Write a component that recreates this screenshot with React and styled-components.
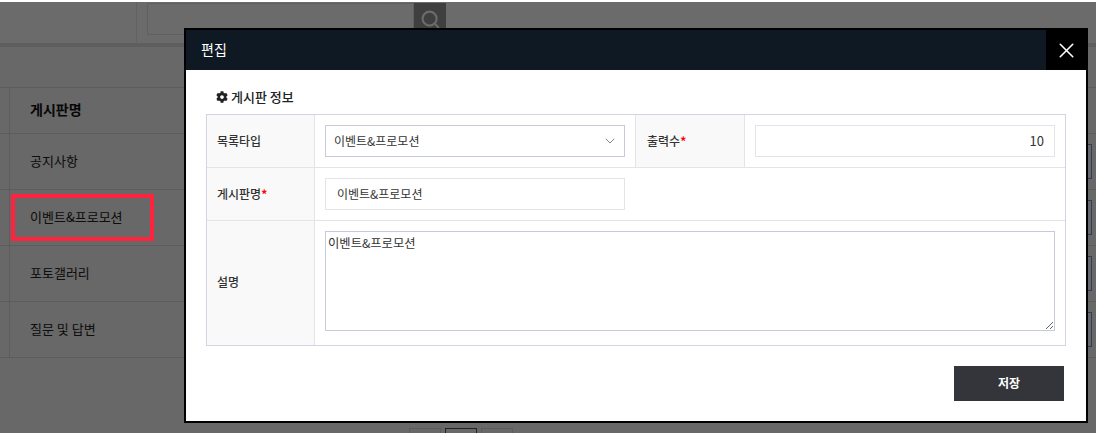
import React from 'react';
import styled, { createGlobalStyle } from 'styled-components';
import { FaCog } from 'react-icons/fa';
import { ChevronDown, Search, X } from 'lucide-react';

const GlobalStyle = createGlobalStyle`
    * {
        box-sizing: border-box;
    }
    html, body {
        margin: 0;
        background: #fff;
        font-family: "Noto Sans CJK KR", "Noto Sans", sans-serif;
        color: #222;
    }
`;

const Screen = styled.div`
    width: 1096px;
    height: 433px;
    padding-top: 2px;
    overflow: hidden;
    background: #fff;
`;

const Stage = styled.div`
    position: relative;
    height: 431px;
    overflow: hidden;
    background: #f7f7f7;
`;

const Backdrop = styled.div`
    position: absolute;
    inset: 0;
    background: rgba(0, 0, 0, 0.58);
`;

const TopBar = styled.header`
    display: flex;
    height: 45px;
    background: #fff;
    border-bottom: 4px solid #e0e0e0;
`;

const Brand = styled.div`
    width: 137px;
    border-right: 1px solid #eaeaea;
`;

const SearchBox = styled.div`
    display: flex;
    height: 32px;
    margin: 1px 0 0 10px;
`;

const SearchInput = styled.div`
    width: 267px;
    border: 1px solid #e4e4e4;
    background: #fff;
`;

const SearchButton = styled.button`
    display: flex;
    align-items: center;
    justify-content: center;
    width: 32px;
    padding: 0;
    border: none;
    background: #969696;
    color: #fff;
`;

const Toolbar = styled.div`
    height: 40px;
`;

const Row = styled.div`
    display: flex;
    align-items: center;
    height: 56px;
    padding-right: 4px;
    border-bottom: 1px solid #dedede;
    ${({ $head }) => $head && 'height: 47px; border-top: 1px solid #dedede;'}
`;

const NameCell = styled.div`
    display: flex;
    align-items: center;
    align-self: stretch;
    margin-left: 9px;
    padding: 0 0 ${({ $head }) => ($head ? '4px' : '2px')} 20px;
    border-left: 1px solid #dedede;
    font-size: ${({ $head }) => ($head ? '14px' : '13px')};
    font-weight: ${({ $head }) => ($head ? 700 : 400)};
    color: ${({ $head }) => ($head ? '#111' : '#222')};
`;

const RowButton = styled.div`
    width: 60px;
    height: 35px;
    margin-left: auto;
    border: 1px solid #6f93d8;
`;

const Pagination = styled.div`
    display: flex;
    gap: 4px;
    margin-top: 70px;
    padding-left: 409px;
`;

const PageButton = styled.div`
    width: 32px;
    height: 32px;
    border: 1px solid ${({ $active }) => ($active ? '#555' : '#dcdcdc')};
`;

const Highlight = styled.div`
    position: absolute;
    left: 11px;
    top: 192px;
    width: 143px;
    height: 47px;
    border: 4px solid #ff2340;
`;

const Modal = styled.section`
    position: absolute;
    left: 184px;
    top: 26px;
    width: 904px;
    height: 395px;
    border: 2px solid #000;
    background: #fff;
`;

const ModalHead = styled.div`
    display: flex;
    align-items: center;
    justify-content: space-between;
    height: 40px;
    padding-left: 15px;
    background: #0f1923;
    color: #fff;
    font-size: 14px;

    span {
        padding-bottom: 2px;
    }
`;

const CloseButton = styled.button`
    display: flex;
    align-items: center;
    justify-content: center;
    width: 40px;
    height: 40px;
    padding: 0;
    border: none;
    background: #000;
    color: #fff;
`;

const ModalBody = styled.div`
    padding: 18px 20px 0;
`;

const SectionTitle = styled.h3`
    display: flex;
    align-items: center;
    gap: 3px;
    height: 18px;
    margin: 0 0 8px;
    padding-left: 10px;
    font-size: 13px;
    font-weight: 500;
    line-height: 18px;
    color: #222;
`;

const FormTable = styled.div`
    display: grid;
    grid-template-columns: 108px 320px 110px 320px;
    grid-template-rows: 53px 53px 124px;
    border: 1px solid #d3d4e0;
`;

const Th = styled.div`
    display: flex;
    align-items: center;
    padding: 0 0 ${({ $last }) => ($last ? '4px' : '2px')} 10px;
    background: #f9f9f9;
    border-right: 1px solid #e3e3e8;
    border-bottom: ${({ $last }) => ($last ? 'none' : '1px solid #e3e3e8')};
    ${({ $middle }) => $middle && 'border-left: 1px solid #e3e3e8; padding-left: 11px;'}
    font-size: 12px;
    font-weight: 500;
    color: #333;

    em {
        font-style: normal;
        font-weight: 700;
        color: #f00;
    }
`;

const Td = styled.div`
    display: flex;
    align-items: flex-start;
    padding: 10px;
    border-bottom: ${({ $last }) => ($last ? 'none' : '1px solid #e3e3e8')};
    grid-column: ${({ $span }) => ($span ? `span ${$span}` : 'auto')};
`;

const SelectBox = styled.div`
    display: flex;
    align-items: center;
    justify-content: space-between;
    width: 300px;
    height: 32px;
    padding: 0 8px 2px;
    border: 1px solid #c5cbdc;
    background: #fff;
    font-size: 12px;
    color: #333;

    svg {
        margin: 2px -2px 0 0;
        color: #666;
    }
`;

const TextInput = styled.input`
    display: block;
    width: 300px;
    height: 32px;
    padding: 0 ${({ $right }) => ($right ? '10px' : '11px')} 2px 11px;
    border: 1px solid #e3e3e8;
    outline: none;
    background: #fff;
    font-family: inherit;
    font-size: ${({ $right }) => ($right ? '13px' : '12px')};
    color: #333;
    text-align: ${({ $right }) => ($right ? 'right' : 'left')};
`;

const TextArea = styled.textarea`
    display: block;
    width: 730px;
    height: 100px;
    padding: 2px;
    border: 1px solid #c5cbdc;
    outline: none;
    background: #fff;
    font-family: inherit;
    font-size: 12.3px;
    line-height: 18px;
    color: #333;
`;

const Footer = styled.div`
    display: flex;
    justify-content: flex-end;
    margin-top: 20px;
    padding-right: 2px;
`;

const SaveButton = styled.button`
    width: 110px;
    height: 35px;
    padding: 0 0 2px;
    border: none;
    background: #34353b;
    font-family: inherit;
    font-size: 12px;
    font-weight: 700;
    color: #fff;
`;

const boards = ['공지사항', '이벤트&프로모션', '포토갤러리', '질문 및 답변'];

const App = () => {
    return (
        <Screen>
            <GlobalStyle />
            <Stage>
                <TopBar>
                    <Brand />
                    <SearchBox>
                        <SearchInput />
                        <SearchButton>
                            <Search size={21} strokeWidth={2.4} />
                        </SearchButton>
                    </SearchBox>
                </TopBar>
                <Toolbar />
                <Row $head>
                    <NameCell $head>게시판명</NameCell>
                </Row>
                {boards.map((name) => (
                    <Row key={name}>
                        <NameCell>{name}</NameCell>
                        <RowButton />
                    </Row>
                ))}
                <Pagination>
                    <PageButton />
                    <PageButton $active />
                    <PageButton />
                </Pagination>

                <Backdrop />
                <Highlight />

                <Modal>
                    <ModalHead>
                        <span>편집</span>
                        <CloseButton>
                            <X size={25} strokeWidth={1.5} />
                        </CloseButton>
                    </ModalHead>
                    <ModalBody>
                        <SectionTitle>
                            <FaCog size={12} />
                            게시판 정보
                        </SectionTitle>
                        <FormTable>
                            <Th>목록타입</Th>
                            <Td>
                                <SelectBox>
                                    이벤트&프로모션
                                    <ChevronDown size={16} strokeWidth={1.2} />
                                </SelectBox>
                            </Td>
                            <Th $middle>출력수<em>*</em></Th>
                            <Td>
                                <TextInput $right readOnly value="10" />
                            </Td>

                            <Th>게시판명<em>*</em></Th>
                            <Td $span={3}>
                                <TextInput readOnly value="이벤트&프로모션" />
                            </Td>

                            <Th $last>설명</Th>
                            <Td $span={3} $last>
                                <TextArea readOnly value="이벤트&프로모션" />
                            </Td>
                        </FormTable>
                        <Footer>
                            <SaveButton>저장</SaveButton>
                        </Footer>
                    </ModalBody>
                </Modal>
            </Stage>
        </Screen>
    );
};

export default App;
